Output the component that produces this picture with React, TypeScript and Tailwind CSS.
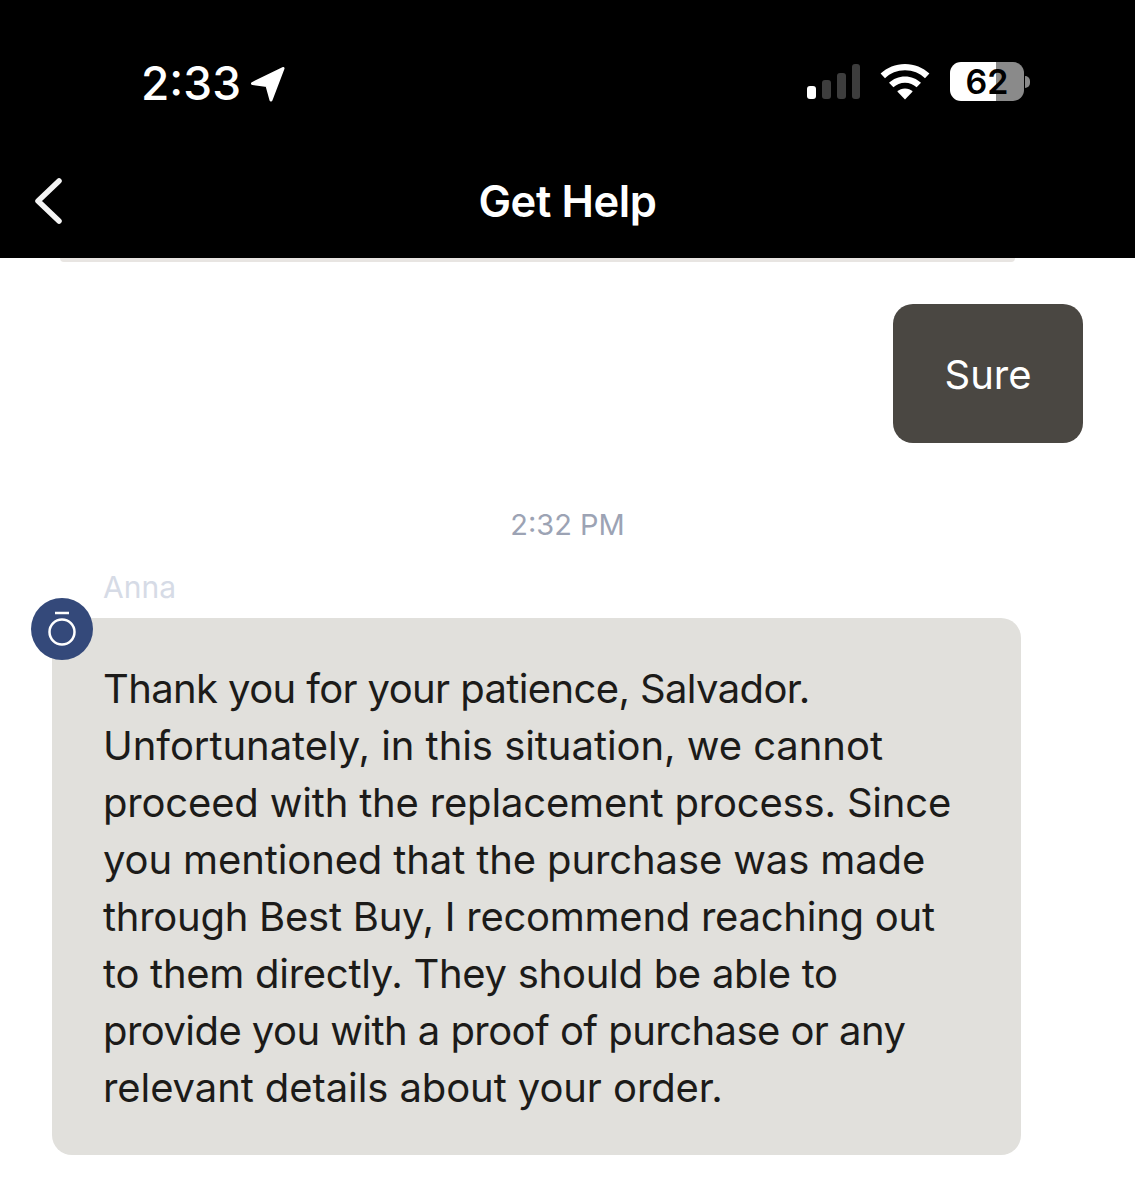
const lines = [
  { text: "Thank you for your patience, Salvador.", tracking: "tracking-[-0.62px]" },
  { text: "Unfortunately, in this situation, we cannot", tracking: "tracking-[-0.05px]" },
  { text: "proceed with the replacement process. Since", tracking: "tracking-[-0.18px]" },
  { text: "you mentioned that the purchase was made", tracking: "tracking-[-0.12px]" },
  { text: "through Best Buy, I recommend reaching out", tracking: "tracking-[-0.26px]" },
  { text: "to them directly. They should be able to", tracking: "tracking-[-0.28px]" },
  { text: "provide you with a proof of purchase or any", tracking: "tracking-[-0.56px]" },
  { text: "relevant details about your order.", tracking: "tracking-[-0.09px]" },
];

function BackChevron() {
  return (
    <svg width="34" height="52" viewBox="0 0 34 52" fill="none" className="absolute left-[32px] top-[29px]">
      <path d="M27 6 L6 26 L27 46" stroke="#f4f4f4" strokeWidth="5.5" strokeLinecap="round" strokeLinejoin="round" />
    </svg>
  );
}

function LocationArrow() {
  return (
    <svg width="36" height="36" viewBox="0 0 36 36" className="ml-[9px] mt-[2px]">
      <path d="M33 2.5 L2.5 17.5 L17 19.5 L21 34 Z" fill="#fff" stroke="#fff" strokeWidth="3" strokeLinejoin="round" />
    </svg>
  );
}

function SignalBars() {
  return (
    <div className="flex items-end gap-[6px]">
      <div className="h-[13px] w-[9px] rounded-[3px] bg-white" />
      <div className="h-[19px] w-[9px] rounded-[3px] bg-[#3d3d3d]" />
      <div className="h-[26px] w-[9px] rounded-[3px] bg-[#3d3d3d]" />
      <div className="h-[35px] w-[8px] rounded-[3px] bg-[#3d3d3d]" />
    </div>
  );
}

function Wifi() {
  return (
    <svg width="50" height="36" viewBox="0 0 50 36">
      <path d="M25 0C15.5 0 7 3.6 0.6 9.6L5 14.2C10.2 9.3 17.2 6.3 25 6.3S39.8 9.3 45 14.2L49.4 9.6C43 3.6 34.5 0 25 0Z" fill="#fff" />
      <path d="M25 12.4C18.8 12.4 13.2 14.8 9 18.8L13.4 23.3C16.4 20.5 20.5 18.7 25 18.7S33.6 20.5 36.6 23.3L41 18.8C36.8 14.8 31.2 12.4 25 12.4Z" fill="#fff" />
      <path d="M25 24.6C22 24.6 19.3 25.8 17.3 27.6L25 35.6L32.7 27.6C30.7 25.8 28 24.6 25 24.6Z" fill="#fff" />
    </svg>
  );
}

function Battery() {
  return (
    <div className="flex items-center">
      <div className="flex h-[39px] w-[74px] items-center justify-center overflow-hidden rounded-[11px] bg-[linear-gradient(90deg,#fff_0,#fff_62%,#8a8a8a_62%,#8a8a8a_100%)]">
        <span className="text-[34px] font-semibold leading-none text-black">62</span>
      </div>
      <div className="ml-[1px] h-[12px] w-[5px] rounded-r-full bg-[#8a8a8a]" />
    </div>
  );
}

export default function App() {
  return (
    <div className="min-h-[1200px] overflow-hidden bg-white font-['Inter',sans-serif]">
      <header className="h-[258px] bg-black text-white">
        <div className="flex h-[146px] items-start justify-between pl-[141px] pr-[105px] pt-[56px]">
          <div className="flex items-center">
            <span className="text-[46px] font-medium leading-[54px]">2:33</span>
            <LocationArrow />
          </div>
          <div className="flex items-center gap-[20px] pt-[6px]">
            <SignalBars />
            <Wifi />
            <Battery />
          </div>
        </div>
        <div className="relative flex h-[112px] items-start justify-center pt-[29px]">
          <BackChevron />
          <h1 className="text-[43.5px] font-semibold leading-[52px] tracking-[-0.4px]">Get Help</h1>
        </div>
      </header>

      <div className="ml-[60px] h-[4px] w-[955px] rounded-b-[16px] bg-[#e8e5e2]" />

      <div className="flex justify-end pr-[52px] pt-[42px]">
        <div className="flex h-[139px] w-[190px] items-center justify-center rounded-[20px] bg-[#4a4742] pt-[3px] text-[40px] text-white">
          Sure
        </div>
      </div>

      <p className="mt-[65px] text-center text-[29px] leading-[34px] text-[#9ca3b4]">2:32 PM</p>

      <p className="ml-[103px] mt-[28px] text-[30px] leading-[34px] text-[#d6dbe6]">Anna</p>

      <div className="relative ml-[52px] mt-[14px] w-[969px] rounded-[20px] bg-[#e1e0dc] pb-[39px] pl-[51px] pt-[42px]">
        <div className="absolute -left-[21px] -top-[20px] flex h-[62px] w-[62px] items-center justify-center rounded-full bg-[#34497a]">
          <svg width="32" height="36" viewBox="0 0 32 36" fill="none" stroke="#fff">
            <path d="M9 2H23" strokeWidth="2.5" />
            <circle cx="16" cy="21" r="12.5" strokeWidth="2.5" />
          </svg>
        </div>
        {lines.map((line) => (
          <p key={line.text} className={`whitespace-nowrap text-[40px] leading-[57px] text-[#1c1b19] ${line.tracking}`}>
            {line.text}
          </p>
        ))}
      </div>
    </div>
  );
}
